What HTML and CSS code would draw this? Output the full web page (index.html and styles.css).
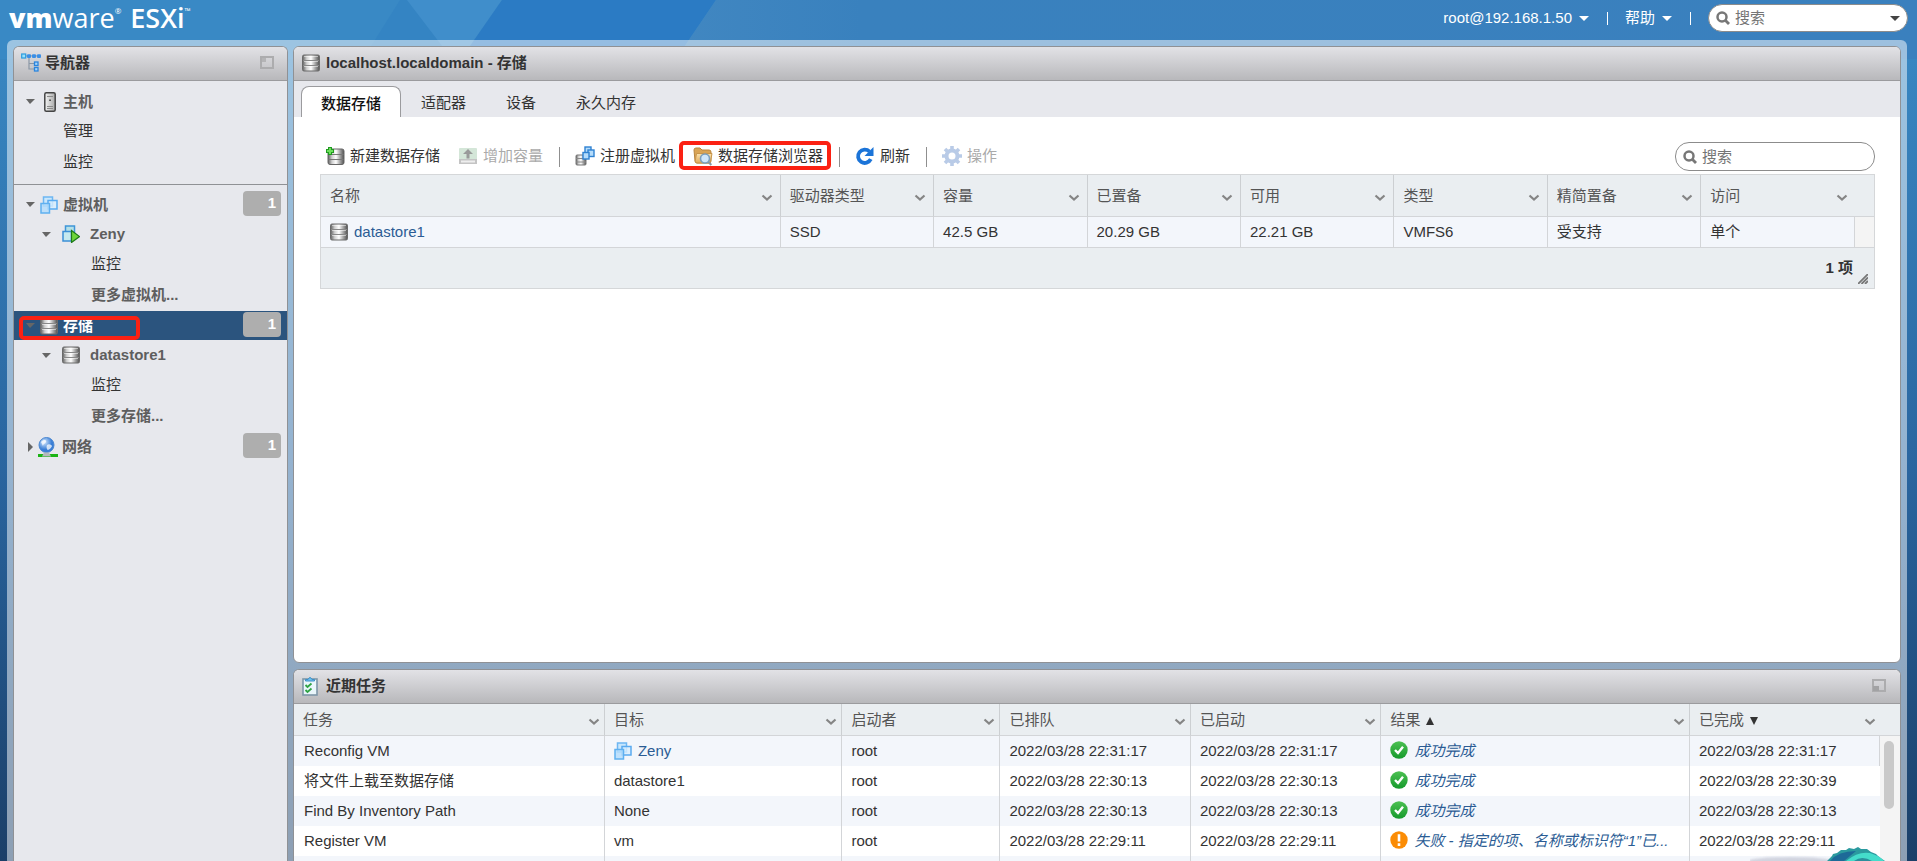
FILE: index.html
```html
<!DOCTYPE html>
<html lang="zh-CN">
<head>
<meta charset="utf-8">
<title>VMware ESXi</title>
<link rel="stylesheet" href="styles.css">
</head>
<body>
<svg class="defs" width="0" height="0" aria-hidden="true">
  <defs>
    <linearGradient id="metal" x1="0" x2="1"><stop offset="0" stop-color="#5e5e5e"/><stop offset=".25" stop-color="#d0d0d0"/><stop offset=".5" stop-color="#ffffff"/><stop offset=".75" stop-color="#a5a5a5"/><stop offset="1" stop-color="#505050"/></linearGradient>
    <linearGradient id="body" x1="0" x2="1"><stop offset="0" stop-color="#f4f4f4"/><stop offset="1" stop-color="#a9a9a9"/></linearGradient>
    <linearGradient id="folder" y2="1" x2="0"><stop offset="0" stop-color="#fbe3ae"/><stop offset="1" stop-color="#e0a95a"/></linearGradient>
    <radialGradient id="globe" cx=".35" cy=".3"><stop offset="0" stop-color="#d4e8fd"/><stop offset="1" stop-color="#3a7ed6"/></radialGradient>
    <linearGradient id="green" y2="1" x2="0"><stop offset="0" stop-color="#4cc052"/><stop offset="1" stop-color="#169a2c"/></linearGradient>
    <linearGradient id="header-right" x1="0" x2="1"><stop offset="0" stop-color="#4187c1"/><stop offset=".15" stop-color="#3981be"/><stop offset="1" stop-color="#3a80be"/></linearGradient>
    <symbol id="i-store" viewBox="0 0 18 18"><rect x=".5" y="1" width="17" height="16" rx="1.500" fill="url(#metal)" stroke="#6a6a6a"/><path d="M1 6.500h16M1 11.500h16" stroke="#888" stroke-width="1"/><path d="M2 7.500h14M2 12.500h14M2 2.500h14" stroke="#fff" stroke-opacity=".5"/></symbol>
    <symbol id="i-vm" viewBox="0 0 18 18"><rect x="3.500" y="1" width="9" height="9" fill="#c9e7fd" stroke="#6eb6f2" stroke-width="1.500"/><rect x="8" y="4.500" width="9" height="8.500" fill="#d8eefe" fill-opacity=".8" stroke="#5aaaf0" stroke-width="1.500"/><rect x="1" y="7.500" width="8.500" height="9.500" fill="#b5ddfc" fill-opacity=".85" stroke="#5fb0f0" stroke-width="1.500"/></symbol>
    <symbol id="i-vm-on" viewBox="0 0 18 18"><rect x="3.500" y="1" width="9" height="9" fill="#b5e0e8" stroke="#3f95d8" stroke-width="1.500"/><rect x="1" y="6.500" width="8.500" height="9.500" fill="#c5e9ef" stroke="#3b8fd6" stroke-width="1.500"/><path d="M9.500 5.500 17.500 11.500 9.500 17.500Z" fill="#6ed53a" stroke="#1d7a18" stroke-width="1.200"/></symbol>
    <symbol id="i-host" viewBox="0 0 12 20"><rect x=".8" y=".8" width="10.400" height="18.400" rx="1.500" fill="url(#body)" stroke="#444" stroke-width="1.500"/><path d="M3 4.500h6M3 14.500h6M3 16.500h6" stroke="#8a8a8a"/><rect x="5.300" y="7.500" width="1.500" height="1.500" fill="#333"/></symbol>
    <symbol id="i-net" viewBox="0 0 20 20"><circle cx="8.500" cy="8" r="7.500" fill="url(#globe)" stroke="#4a86d0"/><path d="M3 5c3-3 6-2 5 0s-3 2-3 4M9 8c2-2 5 0 5 1s-3 4-4 4-2-3-1-5Z" fill="#fff" fill-opacity=".75"/><path d="M0 18.500h20" stroke="#1bb415" stroke-width="3"/><path d="M6 15.500h5l2 4H4Z" fill="#b5b9bb"/></symbol>
    <symbol id="i-tree" viewBox="0 0 20 19"><path d="M8 3v13h6M8 10.500h6M2 3h17" fill="none" stroke="#8a97a5" stroke-width="1.200"/><rect x=".7" y="1" width="4" height="4" fill="#9be2fb" stroke="#2b9ce0" stroke-width="1.200"/><g fill="#3b8fe6"><rect x="6" y="1.200" width="4" height="3.800" rx="1"/><rect x="11" y="1.200" width="4" height="3.800" rx="1"/><rect x="16" y="1.200" width="4" height="3.800" rx="1"/></g><g fill="#a5d4fa" stroke="#2b85dd" stroke-width="1.300"><rect x="13.500" y="9" width="3.500" height="3.500"/><rect x="13.500" y="14.500" width="3.500" height="3.500"/></g></symbol>
    <symbol id="i-search" viewBox="0 0 14 14"><circle cx="6" cy="6" r="4.500" fill="none" stroke="#777" stroke-width="2.500"/><path d="M9.300 9.300 13 13" stroke="#777" stroke-width="2.800"/></symbol>
    <symbol id="i-chev" viewBox="0 0 12 8"><path d="M1.500 1.500 6 5.500 10.500 1.500" fill="none" stroke="#858585" stroke-width="2.200"/></symbol>
    <symbol id="i-ok" viewBox="0 0 18 18"><circle cx="9" cy="9" r="8.700" fill="url(#green)"/><path d="M5 9 8 12 13 5.800" fill="none" stroke="#fff" stroke-width="2.400"/></symbol>
    <symbol id="i-warn" viewBox="0 0 18 18"><circle cx="9" cy="9" r="8.700" fill="#fb8c05"/><path d="M9 3.300v7.200M9 12.300v2.600" stroke="#fff" stroke-width="2.600"/></symbol>
  </defs>
</svg>

<svg class="backdrop" viewBox="0 0 1917 59" preserveAspectRatio="xMinYMin slice" aria-hidden="true">
  <path fill="#3989c5" d="M0 0h1917v59H0Z"/>
  <path fill="#3484c3" d="M400 0h20l32 59h-89Z"/>
  <path fill="#408ecb" d="M407 0h95l-41 59h-9Z"/>
  <path fill="#2b7bc4" d="M502 0h214l-40 59H461Z"/>
  <path fill="url(#header-right)" d="M716 0h1201v59H676Z"/>
</svg>

<div class="app">
  <header class="topbar">
    <div class="logo"><span class="logo-vm">vm</span><span class="logo-ware">ware</span><span class="logo-mark">®</span><span class="logo-esxi">ESXi</span><span class="logo-mark">™</span></div>
    <div class="top-right">
      <button class="menu-btn" type="button">root@192.168.1.50<span class="caret"></span></button>
      <span class="bar"></span>
      <button class="menu-btn" type="button">帮助<span class="caret"></span></button>
      <span class="bar"></span>
      <div class="search search-top">
        <svg class="s14"><use href="#i-search"/></svg>
        <input type="text" placeholder="搜索" aria-label="全局搜索">
        <span class="caret dark"></span>
      </div>
    </div>
  </header>

  <div class="workspace">
    <nav class="panel nav">
      <div class="panel-head nav-head">
        <svg class="tree"><use href="#i-tree"/></svg><h2>导航器</h2>
        <svg class="dock" viewBox="0 0 14 13"><path d="M1 1h12v11H1Z" fill="none" stroke="#acacae" stroke-width="2"/><path d="M2 2h4v4H2Z" fill="#b4b4b6"/></svg>
      </div>
      <div class="group host-group">
        <div class="item"><span class="tw"></span><svg class="host"><use href="#i-host"/></svg><b>主机</b></div>
        <div class="item leaf">管理</div>
        <div class="item leaf more">监控</div>
      </div>
      <div class="group">
        <div class="item"><span class="tw"></span><svg class="s18"><use href="#i-vm"/></svg><b>虚拟机</b><span class="count">1</span></div>
        <div class="item child"><span class="tw"></span><svg class="s18"><use href="#i-vm-on"/></svg><b>Zeny</b></div>
        <div class="item leaf deep">监控</div>
        <div class="item leaf deep more"><b>更多虚拟机...</b></div>
        <div class="item selected"><span class="tw"></span><svg class="s18"><use href="#i-store"/></svg><b>存储</b><span class="count">1</span><span class="mark mark-nav"></span></div>
        <div class="item child"><span class="tw"></span><svg class="s18"><use href="#i-store"/></svg><b>datastore1</b></div>
        <div class="item leaf deep">监控</div>
        <div class="item leaf deep more"><b>更多存储...</b></div>
        <div class="item"><span class="tw closed"></span><svg class="net"><use href="#i-net"/></svg><b>网络</b><span class="count">1</span></div>
      </div>
    </nav>

    <div class="right">
      <main class="panel main">
        <div class="panel-head"><svg class="s18"><use href="#i-store"/></svg><h2>localhost.localdomain - 存储</h2></div>
        <div class="tabs" role="tablist">
          <button type="button" role="tab" aria-selected="true" class="tab active">数据存储</button>
          <button type="button" role="tab" class="tab">适配器</button>
          <button type="button" role="tab" class="tab">设备</button>
          <button type="button" role="tab" class="tab">永久内存</button>
        </div>
        <div class="content">
          <div class="toolbar">
            <button type="button" class="tool create"><svg class="s20" viewBox="0 0 20 20"><rect x="3" y="3" width="16" height="15.500" rx="2" fill="url(#metal)" stroke="#666"/><path d="M3.500 8.500h15M3.500 13.500h15" stroke="#777"/><path d="M5 1v8M1 5h8" stroke="#219a21" stroke-width="4"/><path d="M5 2v6M2 5h6" stroke="#6de05c" stroke-width="2"/></svg>新建数据存储</button>
            <button type="button" class="tool" disabled><svg class="s20" viewBox="0 0 20 20"><rect x="1" y="2" width="18" height="16" rx="1" fill="#d4e6d8"/><path d="M1 13h18v5H1Z" fill="#c4c4c4"/><path d="M3 15.500h14" stroke="#eee" stroke-width="2"/><path d="M10 3 15 8h-3.500v4.500h-3V8H5Z" fill="#9a9a9a"/></svg>增加容量</button>
            <span class="sep"></span>
            <button type="button" class="tool register"><svg class="s20" viewBox="0 0 20 20"><rect x="1" y="9" width="10" height="10" rx="1" fill="url(#metal)" stroke="#777"/><path d="M1 12.500h10M1 16h10" stroke="#888"/><g fill="#b5dcfb" stroke="#2f82d2" stroke-width="1.400"><rect x="10" y="1" width="6" height="7"/><rect x="13" y="4" width="6" height="6.500"/><rect x="8" y="6.500" width="6" height="6.500"/></g></svg>注册虚拟机</button>
            <button type="button" class="tool browse"><svg class="s20" viewBox="0 0 20 20"><path d="M1 4q0-2 2-2h4l2 2h7q2 0 2 2v9q0 2-2 2H4q-1.500 0-2-2Z" fill="#d9a455" stroke="#b9853e"/><path d="M3.500 7.500H19l-1.500 8q-.4 1.500-2 1.500H4q-2 0-1.800-2Z" fill="url(#folder)" stroke="#c8954a"/><circle cx="12" cy="12.500" r="4.500" fill="#cfe6fa" stroke="#7b9fbd" stroke-width="1.600"/><path d="m15.500 16 2.800 3" stroke="#8a99a5" stroke-width="2"/></svg>数据存储浏览器<span class="mark mark-tool"></span></button>
            <span class="sep"></span>
            <button type="button" class="tool"><svg class="s20" viewBox="0 0 20 20"><path d="M15.800 13.200A6.700 6.700 0 1 1 14.500 5.500" fill="none" stroke="#1b74d8" stroke-width="3.800"/><path d="M18.500 1v9h-9Z" fill="#1b74d8"/></svg>刷新</button>
            <span class="sep"></span>
            <button type="button" class="tool" disabled><svg class="s20" viewBox="0 0 20 20"><g stroke="#b9cbe7" fill="none"><circle cx="10" cy="10" r="5.500" stroke-width="4"/><path d="M10 0v4M10 16v4M0 10h4M16 10h4M3 3l3 3M14 14l3 3M17 3l-3 3M6 14l-3 3" stroke-width="3.600"/></g></svg>操作</button>
            <div class="search search-grid"><svg class="s14"><use href="#i-search"/></svg><input type="text" placeholder="搜索" aria-label="搜索数据存储"></div>
          </div>
          <div class="grid">
            <table class="stores">
              <colgroup><col class="w-name"><col class="w-s"><col class="w-s"><col class="w-s"><col class="w-s"><col class="w-s"><col class="w-s"><col class="w-s"><col></colgroup>
              <thead><tr>
                <th>名称<svg><use href="#i-chev"/></svg></th><th>驱动器类型<svg><use href="#i-chev"/></svg></th><th>容量<svg><use href="#i-chev"/></svg></th><th>已置备<svg><use href="#i-chev"/></svg></th><th>可用<svg><use href="#i-chev"/></svg></th><th>类型<svg><use href="#i-chev"/></svg></th><th>精简置备<svg><use href="#i-chev"/></svg></th><th>访问<svg><use href="#i-chev"/></svg></th><th></th>
              </tr></thead>
              <tbody><tr>
                <td><a href="#"><svg class="s18"><use href="#i-store"/></svg>datastore1</a></td><td>SSD</td><td>42.5 GB</td><td>20.29 GB</td><td>22.21 GB</td><td>VMFS6</td><td>受支持</td><td>单个</td><td class="gutter"></td>
              </tr></tbody>
            </table>
            <div class="grid-foot">1 项<svg class="grip" viewBox="0 0 10 10"><path d="M0 10 10 0M3.500 10 10 3.500M7 10l3-3" stroke="#777" stroke-width="1.800"/></svg></div>
          </div>
        </div>
      </main>

      <section class="panel tasks">
        <div class="panel-head">
          <svg class="clip" viewBox="0 0 16 20"><rect x="1" y="3" width="14" height="16" fill="#e9f6fb" stroke="#7d97a8" stroke-width="1.600"/><path d="M3.500 5V3.500h2.500q2-4 4 0h2.500V5Z" fill="#6fc0ee" stroke="#3f8fc6"/><path d="m3.500 9 2 2 4-3.500M3.500 14l2 2 4-3.500" fill="none" stroke="#2fa344" stroke-width="1.800"/></svg>
          <h2>近期任务</h2>
          <svg class="dock" viewBox="0 0 14 13"><path d="M1 1h12v11H1Z" fill="none" stroke="#acacae" stroke-width="2"/><path d="M1 7h6v5H1Z" fill="#a2a2a4"/></svg>
        </div>
        <table class="log">
          <colgroup><col class="c1"><col class="c2"><col class="c3"><col class="c4"><col class="c4"><col class="c5"><col class="c4"><col></colgroup>
          <thead><tr>
            <th>任务<svg><use href="#i-chev"/></svg></th><th>目标<svg><use href="#i-chev"/></svg></th><th>启动者<svg><use href="#i-chev"/></svg></th><th>已排队<svg><use href="#i-chev"/></svg></th><th>已启动<svg><use href="#i-chev"/></svg></th><th>结果<i class="sort up"></i><svg><use href="#i-chev"/></svg></th><th>已完成<i class="sort down"></i><svg><use href="#i-chev"/></svg></th><th></th>
          </tr></thead>
          <tbody>
            <tr><td>Reconfig VM</td><td><a href="#"><svg class="s18"><use href="#i-vm"/></svg>Zeny</a></td><td>root</td><td>2022/03/28 22:31:17</td><td>2022/03/28 22:31:17</td><td class="res"><svg class="s18"><use href="#i-ok"/></svg><em>成功完成</em></td><td>2022/03/28 22:31:17</td><td class="scroll" rowspan="5"><div class="thumb"></div></td></tr>
            <tr><td>将文件上载至数据存储</td><td>datastore1</td><td>root</td><td>2022/03/28 22:30:13</td><td>2022/03/28 22:30:13</td><td class="res"><svg class="s18"><use href="#i-ok"/></svg><em>成功完成</em></td><td>2022/03/28 22:30:39</td></tr>
            <tr><td>Find By Inventory Path</td><td>None</td><td>root</td><td>2022/03/28 22:30:13</td><td>2022/03/28 22:30:13</td><td class="res"><svg class="s18"><use href="#i-ok"/></svg><em>成功完成</em></td><td>2022/03/28 22:30:13</td></tr>
            <tr><td>Register VM</td><td>vm</td><td>root</td><td>2022/03/28 22:29:11</td><td>2022/03/28 22:29:11</td><td class="res"><svg class="s18"><use href="#i-warn"/></svg><em>失败 - 指定的项、名称或标识符“1”已...</em></td><td>2022/03/28 22:29:11</td></tr>
            <tr><td></td><td></td><td></td><td></td><td></td><td class="res"><svg class="s18"><use href="#i-ok"/></svg></td><td></td></tr>
          </tbody>
        </table>
      </section>
    </div>
  </div>
</div>
<svg class="mascot" viewBox="0 0 150 14" aria-hidden="true">
  <ellipse class="mascot-shade" cx="40" cy="14" rx="42" ry="4" fill="#c3c6d4" opacity=".7"/>
  <path d="M77 14 82 9l1-2 4-1 4-3 5 0 3-2 5 1 4-2 3 2 6 0 4 3 5 2 2 2 4 3 3 2Z" fill="#2b9a9f"/>
  <path d="M80 14Q88 4 106 4L94 14Z" fill="#1d6a98"/>
  <path d="M96 14Q108 4 120 6 130 9 134 14Z" fill="#44dccb"/>
  <path d="M104 14Q112 8 122 14Z" fill="#2a8f9c"/>
</svg>
</body>
</html>
```

FILE: styles.css
```css
* { box-sizing: border-box; }

body {
  margin: 0;
  height: 100vh;
  overflow: hidden;
  position: relative;
  font: 15px/20px "Liberation Sans", Arial, "Noto Sans CJK SC", sans-serif;
  color: #333;
  background: linear-gradient(#3989c5 0, #3886c1 60px, #2a659f 470px, #225487 640px, #1b3f68 100%);
}

h2 { margin: 0; font-size: 15px; line-height: 20px; font-weight: bold; }
button, input { font: inherit; color: inherit; }
a { color: #2b5c94; text-decoration: none; }
svg { flex: none; display: block; }

.defs { position: absolute; }
.backdrop { position: absolute; left: 0; top: 0; width: 100%; height: 59px; }
.s14 { width: 14px; height: 14px; }
.s18 { width: 18px; height: 18px; }
.s20 { width: 20px; height: 20px; }

.app { position: relative; height: 100%; display: flex; flex-direction: column; }

/* top bar */
.topbar { flex: none; height: 40px; padding: 0 9px 4px; display: flex; align-items: center; justify-content: space-between; color: #fff; }
.logo { display: flex; align-items: center; height: 36px; font-family: "Open Sans", sans-serif; font-size: 27px; line-height: 36px; }
.logo-vm { font-weight: 800; }
.logo-esxi { font-weight: 600; margin-left: 9px; }
.logo-mark { font-size: 8px; line-height: 10px; align-self: flex-start; padding-top: 6px; }
.top-right { display: flex; align-items: center; }
.menu-btn { border: 0; background: none; padding: 0; display: flex; align-items: center; gap: 7px; line-height: 20px; }
.caret { border: 5px solid transparent; border-top-color: currentColor; border-bottom: 0; }
.caret.dark { color: #444; }
.bar { width: 1px; height: 13px; background: #fff; margin: 0 17px 0 18px; }

.search { display: flex; align-items: center; background: #fff; border: 1px solid #8c8c8c; border-radius: 14px; width: 200px; height: 28px; padding: 0 7px; gap: 5px; }
.search input { flex: 1; min-width: 0; border: 0; padding: 0; background: none; outline: 0; color: #333; }
.search input::placeholder { color: #757575; }

/* workspace */
.workspace { flex: 1; min-height: 0; margin: 0 10px 0 7px; padding: 6px 6px 0; border-radius: 6px 6px 0 0; background: rgba(255, 255, 255, .5); display: grid; grid-template-columns: 275px minmax(0, 1fr); gap: 5px; }
.right { min-height: 0; display: flex; flex-direction: column; gap: 6px; }
.panel { border: 1px solid #8f9195; border-radius: 6px; overflow: hidden; background: #fff; }
.panel-head { height: 34px; padding: 0 8px 2px; display: flex; align-items: center; gap: 6px; background: linear-gradient(#e2e2e6, #b8b8bb); border-bottom: 1px solid #9b9b9e; }
.dock { width: 14px; height: 13px; margin-left: auto; }
.tasks .dock { margin-right: 6px; }

/* navigator */
.nav { background: #e7e8ed; border-bottom: 0; border-radius: 6px 6px 0 0; }
.nav-head { gap: 4px; padding-left: 7px; padding-right: 13px; }
.tree { width: 20px; height: 19px; }
.group { padding-top: 5px; }
.host-group { padding: 6px 0; border-bottom: 1px solid #8f9195; }
.item { position: relative; height: 29px; display: flex; align-items: center; padding: 0 6px 0 12px; }
.item b { color: #5e5e5e; }
.item .tw { width: 9px; border: 5px solid transparent; border-top-color: #666; border-bottom: 0; margin-right: 5px; flex: none; border-left-width: 4px; }
.item .tw.closed { width: 5px; border: 5px solid transparent; border-left-color: #666; border-right: 0; margin: 0 7px 0 2px; }
.item svg { margin-right: 5px; }
.host { width: 12px; height: 20px; }
.item .host { margin: 0 7px 0 4px; }
.net { width: 20px; height: 20px; }
.item .net { margin: 0 4px 0 -2px; }
.child { padding-left: 28px; height: 30px; }
.child .tw { margin-right: 11px; }
.child svg { margin-right: 10px; }
.leaf { padding-left: 49px; }
.deep { padding-left: 77px; }
.more { height: 33px; }
.selected { background: #2b547e; }
.item.selected b { color: #fff; }
.count { margin-left: auto; margin-bottom: 2px; width: 38px; height: 25px; border-radius: 4px; background: #aeaeae; color: #fff; font-weight: bold; line-height: 24px; text-align: right; padding-right: 5px; }
.mark { position: absolute; border: 4px solid #fb2113; border-radius: 5px; pointer-events: none; }
.mark-nav { left: 5px; top: 5px; width: 121px; height: 24px; }
.mark-tool { left: -14px; right: -8px; top: -2px; height: 29px; }

/* tabs */
.main { flex: 1; min-height: 0; }
.tabs { display: flex; padding: 5px 7px 0; background: #e7e8ed; height: 36px; }
.tab { border: 0; background: none; padding: 0 20px; height: 31px; line-height: 33px; }
.tab.active { background: #fff; border: 1px solid #9b9b9e; border-bottom: 0; border-radius: 8px 8px 0 0; padding: 0 19px; font-weight: 500; color: #111; }

/* toolbar */
.content { padding: 25px 25px 0 26px; }
.toolbar { display: flex; align-items: center; height: 29px; margin-bottom: 3px; padding-left: 5px; }
.tool { position: relative; border: 0; background: none; padding: 0 0 2px; margin-right: 16px; display: flex; align-items: center; gap: 5px; height: 28px; white-space: nowrap; }
.tool:disabled { color: #aaa; }
.create { margin-right: 18px; }
.register { margin-right: 18px; }
.sep { width: 1px; height: 20px; background: #8f8f8f; margin-right: 15px; }
.search-grid { height: 29px; margin-left: auto; }

/* grids */
.grid { border: 1px solid #d5d7d9; background: #eaeef1; }
table { width: 100%; table-layout: fixed; border-collapse: separate; border-spacing: 0; }
th, td { padding: 0 0 0 9px; text-align: left; font-weight: normal; white-space: nowrap; overflow: hidden; }
th { background: #eaeef1; color: #555; position: relative; border-right: 1px solid #cccfd2; border-bottom: 1px solid #d3d5d8; }
th svg { position: absolute; right: 7px; top: 50%; width: 12px; height: 8px; margin-top: -2px; }
th:nth-last-child(-n+2) { border-right: 0; }
th:last-child { padding: 0; }
td { border-right: 1px solid #d3d5d8; }
td:last-child { border-right: 0; }
td a { display: flex; align-items: center; gap: 6px; }
.w-name { width: 29.6%; }
.w-s { width: 9.88%; }
.stores th { height: 42px; }
.stores td { height: 31px; background: #f3f6fb; border-bottom: 1px solid #d3d5d8; }
.stores .gutter { background: #f4f4f4; padding: 0; }
.grid-foot { position: relative; height: 40px; line-height: 40px; padding-right: 21px; text-align: right; font-weight: bold; }
.grip { position: absolute; right: 6px; bottom: 4px; width: 10px; height: 10px; }

/* recent tasks */
.tasks { flex: 0 0 192px; border-bottom: 0; border-radius: 6px 6px 0 0; }
.tasks .clip { width: 16px; height: 20px; }
.tasks .panel-head { gap: 8px; }
.c1 { width: 19.36%; }
.c2 { width: 14.79%; }
.c3 { width: 9.84%; }
.c4 { width: 11.86%; }
.c5 { width: 19.21%; }
.log th { height: 32px; }
.log th svg { right: 4px; }
.log td { height: 30px; }
.log td:first-child { padding-left: 10px; }
.log tbody tr:nth-child(odd) td { background: #f3f6fb; }
.res svg { float: left; margin: 0 6px 0 0; }
.res em { color: #2b5c94; }
.log tbody .scroll, .log tbody tr:nth-child(odd) .scroll { padding: 5px 4px; background: #f4f4f4; vertical-align: top; }
.thumb { width: 10px; height: 68px; border-radius: 5px; background: #c9c9c9; }
.sort { display: inline-block; border: 4px solid transparent; margin-left: 6px; }
.sort.up { border-bottom: 8px solid #333; border-top: 0; }
.sort.down { border-top: 8px solid #333; border-bottom: 0; }

.mascot { position: absolute; right: 17px; bottom: 0; width: 150px; height: 14px; }
.mascot-shade { filter: blur(1px); }
```
